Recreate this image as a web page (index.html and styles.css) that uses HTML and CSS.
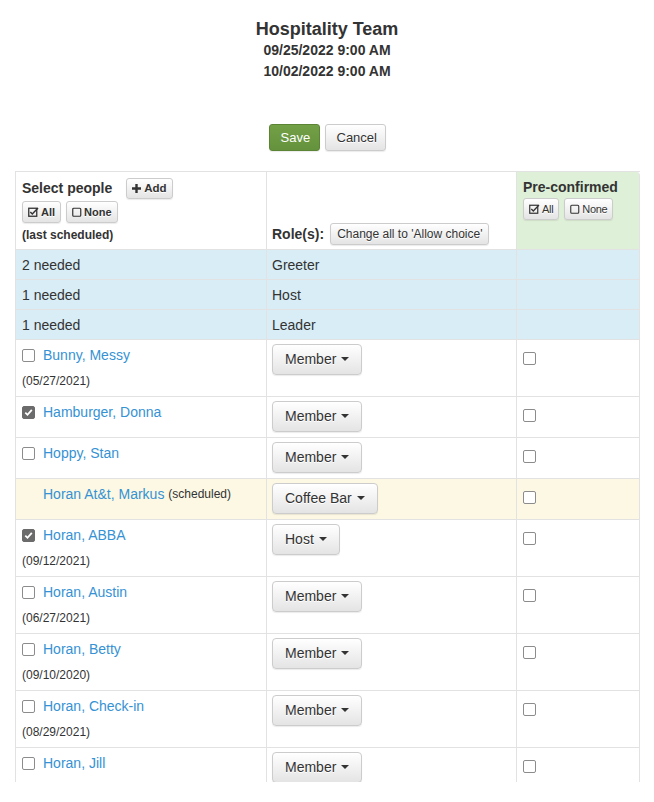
FILE: index.html
```html
<!DOCTYPE html>
<html>
<head>
<meta charset="utf-8">
<link rel="stylesheet" href="styles.css">
</head>
<body>
<div class="page">
  <div class="heading">
    <div class="title">Hospitality Team</div>
    <div class="date">09/25/2022 9:00 AM</div>
    <div class="date">10/02/2022 9:00 AM</div>
  </div>
  <div class="actions">
    <button class="btn btn-save">Save</button>
    <button class="btn btn-cancel">Cancel</button>
  </div>
  <table class="grid">
    <colgroup><col class="c1"><col class="c2"><col class="c3"></colgroup>
    <thead>
      <tr>
        <th class="h-people">
          <div class="hrow"><span class="hlabel">Select people</span><button class="btn btn-xs bold add"><svg width="9" height="9" viewBox="0 0 9 9"><path d="M3.3 0h2.4v3.3H9v2.4H5.7V9H3.3V5.7H0V3.3h3.3z" fill="#333"/></svg>Add</button></div>
          <div class="hrow2"><button class="btn btn-xs bold"><svg class="ic" width="11" height="10" viewBox="0 0 11 10"><rect x="0.75" y="1.25" width="8" height="8" fill="none" stroke="#333" stroke-width="1.3"/><path d="M2.3 5l2 2 5.7-6" fill="none" stroke="#333" stroke-width="1.5"/></svg>All</button><button class="btn btn-xs bold"><svg class="ic" width="10" height="10" viewBox="0 0 10 10"><rect x="0.75" y="1.25" width="8" height="8" rx="1" fill="none" stroke="#333" stroke-width="1.2"/></svg>None</button></div>
          <div class="last">(last scheduled)</div>
        </th>
        <th class="h-roles"><span class="hlabel">Role(s):</span><button class="btn btn-xs change">Change all to 'Allow choice'</button></th>
        <th class="h-pre">
          <div class="hlabel pre">Pre-confirmed</div>
          <div class="hrow2 pre-btns"><button class="btn btn-xs"><svg class="ic" width="11" height="10" viewBox="0 0 11 10"><rect x="0.75" y="1.25" width="8" height="8" fill="none" stroke="#333" stroke-width="1.2"/><path d="M2.3 5l2 2 5.7-6" fill="none" stroke="#333" stroke-width="1.3"/></svg>All</button><button class="btn btn-xs"><svg class="ic" width="10" height="10" viewBox="0 0 10 10"><rect x="0.75" y="1.25" width="8" height="8" rx="1" fill="none" stroke="#333" stroke-width="1.1"/></svg>None</button></div>
        </th>
      </tr>
    </thead>
    <tbody>
      <tr class="info"><td>2 needed</td><td>Greeter</td><td></td></tr>
      <tr class="info"><td>1 needed</td><td>Host</td><td></td></tr>
      <tr class="info"><td>1 needed</td><td>Leader</td><td></td></tr>

      <tr><td><div class="person"><span class="cb"></span><a class="name">Bunny, Messy</a></div><div class="last-date">(05/27/2021)</div></td>
        <td><button class="btn role">Member <span class="caret"></span></button></td><td><span class="cb pc"></span></td></tr>
      <tr><td><div class="person"><span class="cb on"><svg width="9" height="9" viewBox="0 0 9 9"><path d="M1.3 4.6l2.2 2.2 4.3-5" fill="none" stroke="#fff" stroke-width="1.8"/></svg></span><a class="name">Hamburger, Donna</a></div></td>
        <td><button class="btn role">Member <span class="caret"></span></button></td><td><span class="cb pc"></span></td></tr>
      <tr><td><div class="person"><span class="cb"></span><a class="name">Hoppy, Stan</a></div></td>
        <td><button class="btn role">Member <span class="caret"></span></button></td><td><span class="cb pc"></span></td></tr>
      <tr class="warning"><td><div class="person"><span class="cb-space"></span><a class="name">Horan At&amp;t, Markus</a>&nbsp;<span class="sched">(scheduled)</span></div></td>
        <td><button class="btn role">Coffee Bar <span class="caret"></span></button></td><td><span class="cb pc"></span></td></tr>
      <tr><td><div class="person"><span class="cb on"><svg width="9" height="9" viewBox="0 0 9 9"><path d="M1.3 4.6l2.2 2.2 4.3-5" fill="none" stroke="#fff" stroke-width="1.8"/></svg></span><a class="name">Horan, ABBA</a></div><div class="last-date">(09/12/2021)</div></td>
        <td><button class="btn role">Host <span class="caret"></span></button></td><td><span class="cb pc"></span></td></tr>
      <tr><td><div class="person"><span class="cb"></span><a class="name">Horan, Austin</a></div><div class="last-date">(06/27/2021)</div></td>
        <td><button class="btn role">Member <span class="caret"></span></button></td><td><span class="cb pc"></span></td></tr>
      <tr><td><div class="person"><span class="cb"></span><a class="name">Horan, Betty</a></div><div class="last-date">(09/10/2020)</div></td>
        <td><button class="btn role">Member <span class="caret"></span></button></td><td><span class="cb pc"></span></td></tr>
      <tr><td><div class="person"><span class="cb"></span><a class="name">Horan, Check-in</a></div><div class="last-date">(08/29/2021)</div></td>
        <td><button class="btn role">Member <span class="caret"></span></button></td><td><span class="cb pc"></span></td></tr>
      <tr class="last-row"><td><div class="person"><span class="cb"></span><a class="name">Horan, Jill</a></div></td>
        <td><button class="btn role">Member <span class="caret"></span></button></td><td><span class="cb pc"></span></td></tr>
    </tbody>
  </table>
</div>
</body>
</html>
```
FILE: styles.css
```css
* { box-sizing: border-box; }
body {
  margin: 0;
  font-family: "Liberation Sans", Arial, sans-serif;
  font-size: 14px;
  color: #333;
  background: #fff;
}
.page {
  padding: 18px 15px 0;
  height: 782px;
  overflow: hidden;
}
.heading { text-align: center; font-weight: bold; }
.title { font-size: 18px; line-height: 22px; }
.date { font-size: 14px; line-height: 21px; }
.actions {
  display: flex;
  justify-content: center;
  gap: 5px;
  margin-top: 42px;
  margin-bottom: 20px;
}
.btn {
  font-family: "Liberation Sans", Arial, sans-serif;
  border: 1px solid #ccc;
  border-radius: 3px;
  background: linear-gradient(#fff, #e4e4e4);
  color: #333;
  text-shadow: 0 1px 0 #fff;
  box-shadow: 0 1px 1px rgba(0,0,0,0.08);
  cursor: pointer;
  white-space: nowrap;
}
.btn-save, .btn-cancel {
  font-size: 13px;
  line-height: 17px;
  padding: 4px 11px;
  height: 27px;
}
.btn-save {
  background: linear-gradient(#72a046, #65923d);
  border-color: #5c8435;
  color: #fff;
  text-shadow: none;
  width: 51px;
}
.btn-cancel { width: 61px; }

.grid {
  width: 624px;
  table-layout: fixed;
  border-collapse: separate;
  border-spacing: 0;
  border-top: 1px solid #e2e2e2;
  border-left: 1px solid #e2e2e2;
}
.c1 { width: 251px; }
.c2 { width: 250px; }
.c3 { width: 123px; }
.grid th, .grid td {
  border-right: 1px solid #e2e2e2;
  border-bottom: 1px solid #e2e2e2;
  padding: 4px 6px 5px;
  text-align: left;
  vertical-align: top;
  line-height: 20px;
  font-weight: normal;
}
.grid td:nth-child(2), .grid th:nth-child(2) { padding-left: 5px; }
.grid th { padding-top: 5px; padding-bottom: 5px; }
.info td { padding-top: 5px; padding-bottom: 4px; }
.last-row td { height: 60px; }
.hlabel { font-weight: bold; font-size: 14px; }
.hrow { display: flex; align-items: center; height: 22px; gap: 14px; }
.hrow2 { display: flex; gap: 5px; margin-top: 2px; }
.last { font-weight: bold; font-size: 12px; line-height: 18px; margin-top: 3px; }
.btn-xs {
  font-size: 11px;
  line-height: 14px;
  padding: 3px 5px 3px;
  height: 22px;
  display: inline-flex;
  align-items: center;
  gap: 2px;
}
.btn-xs.bold { font-weight: bold; }
.add { height: 21px; padding: 3px 5px; font-size: 11.5px; }
.add svg { margin-right: 1px; }
.h-roles { vertical-align: bottom !important; padding-bottom: 4px !important; }
.h-roles .hlabel { margin-right: 6px; vertical-align: middle; }
.change { font-size: 12px; vertical-align: middle; padding: 3px 6px; }
.h-pre {
  background: #dff0d8;
  border-top-right-radius: 4px;
}
.pre { line-height: 20px; }
.pre-btns { margin-top: 1px; }
.pre-btns .btn { font-size: 11px; letter-spacing: -0.3px; }

.info td { background: #d9edf7; }
.warning td { background: #fcf8e3; }

.person { display: flex; align-items: center; height: 22px; }
.cb {
  display: inline-flex;
  align-items: center;
  justify-content: center;
  width: 13px;
  height: 13px;
  border: 1px solid #8c8c8c;
  border-radius: 2px;
  background: #fff;
  margin-right: 8px;
  flex: none;
}
.cb.on { background: #6b6b6b; border-color: #6b6b6b; }
.cb-space { width: 21px; flex: none; }
.cb.pc { margin-top: 8px; }
.name { color: #3592d4; text-decoration: none; font-size: 14px; }
.sched { font-size: 12px; color: #333; }
.last-date { font-size: 12px; line-height: 20px; margin-top: 5px; }
.role {
  font-size: 14px;
  line-height: 19px;
  padding: 5px 12px;
  height: 31px;
  border-radius: 4px;
}
.caret {
  display: inline-block;
  width: 0;
  height: 0;
  margin-left: 1px;
  vertical-align: middle;
  border-top: 4px solid #333;
  border-left: 4px solid transparent;
  border-right: 4px solid transparent;
  position: relative;
  top: -1px;
}
```
